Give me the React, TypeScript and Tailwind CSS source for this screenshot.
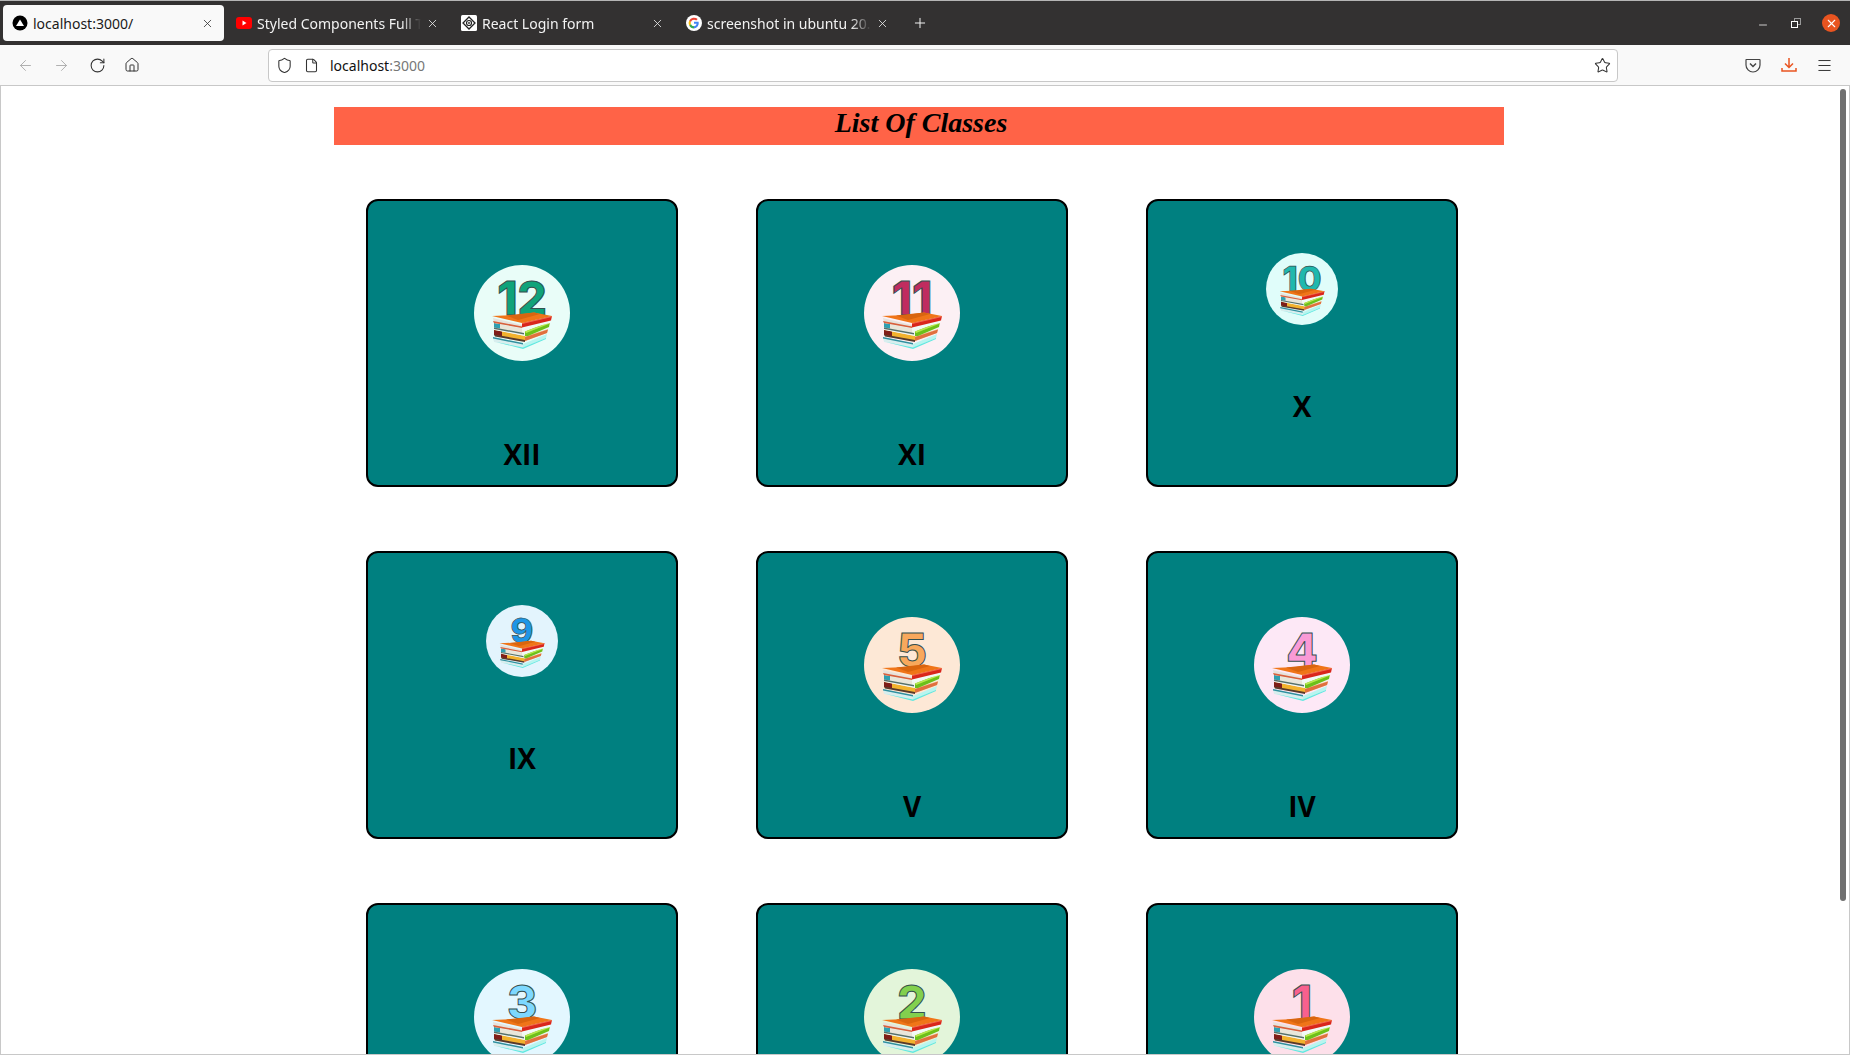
import { ArrowLeft, ArrowRight, File, Home, Menu, Minus, Plus, RotateCw, Shield, Star, X } from 'lucide-react'

interface ClassCard {
  label: string
  num: string
  color: string
  bg: string
  small?: boolean
}

const CLASSES: ClassCard[] = [
  { label: 'XII', num: '12', color: '#0fa37a', bg: 'bg-[#e9fdf8]' },
  { label: 'XI', num: '11', color: '#c02c5f', bg: 'bg-[#fcf0f4]' },
  { label: 'X', num: '10', color: '#1fb8ae', bg: 'bg-[#e0fdfa]', small: true },
  { label: 'IX', num: '9', color: '#1f96e6', bg: 'bg-[#e3f4fd]', small: true },
  { label: 'V', num: '5', color: '#f8a85c', bg: 'bg-[#fde8d6]' },
  { label: 'IV', num: '4', color: '#fa9ad6', bg: 'bg-[#fde8f6]' },
  { label: 'III', num: '3', color: '#7dd8ff', bg: 'bg-[#e3f7ff]' },
  { label: 'II', num: '2', color: '#82d04e', bg: 'bg-[#e3f5da]' },
  { label: 'I', num: '1', color: '#f8608e', bg: 'bg-[#fde0ea]' },
]

const TABS = [
  { title: 'Styled Components Full Tutorial', icon: 'yt' },
  { title: 'React Login form', icon: 'react' },
  { title: 'screenshot in ubuntu 20.04', icon: 'google' },
]

function Favicon({ kind }: { kind: string }) {
  if (kind === 'yt') {
    return (
      <svg viewBox="0 0 16 16" className="size-4 shrink-0">
        <rect x="0" y="2" width="16" height="12" rx="3" fill="#f00" />
        <path d="M6.5 5.5 10.5 8l-4 2.500z" fill="#fff" />
      </svg>
    )
  }
  if (kind === 'react') {
    return (
      <svg viewBox="0 0 16 16" className="size-4 shrink-0">
        <rect width="16" height="16" rx="1.500" fill="#fff" />
        <path d="M8 2 14 8 8 14 2 8z" fill="none" stroke="#222" strokeWidth="1.300" />
        <circle cx="8" cy="8" r="2.500" fill="none" stroke="#222" strokeWidth="1.200" />
        <circle cx="8" cy="8" r="0.900" fill="#222" />
      </svg>
    )
  }
  if (kind === 'google') {
    return (
      <svg viewBox="0 0 16 16" className="size-4 shrink-0">
        <circle cx="8" cy="8" r="8" fill="#fff" />
        <path d="M12.600 6.800H8v1.900h2.700A3 3 0 0 1 8 11.300V13.400a5.300 5.300 0 0 0 4.600-6.600z" fill="#4285f4" />
        <path d="M8 11.300a3.300 3.300 0 0 1-3.100-2.200L3.200 10.400A5.400 5.400 0 0 0 8 13.400z" fill="#34a853" />
        <path d="M4.900 9.100a3.300 3.300 0 0 1 0-2.200L3.200 5.600a5.400 5.400 0 0 0 0 4.800z" fill="#fbbc05" />
        <path d="M8 4.700c.9 0 1.600.3 2.200.9l1.500-1.500A5.400 5.400 0 0 0 3.200 5.600l1.700 1.300A3.300 3.300 0 0 1 8 4.700z" fill="#ea4335" />
      </svg>
    )
  }
  return (
    <svg viewBox="0 0 16 16" className="size-4 shrink-0">
      <circle cx="8" cy="8" r="7.500" fill="#000" />
      <path d="M8 4.500 12 11H4z" fill="#fff" />
    </svg>
  )
}

function TabBar() {
  return (
    <div className="flex h-[45px] shrink-0 items-start border-t border-[#b5b5b5] bg-[#333131] pl-[3px] pt-[4px] font-['Noto_Sans',sans-serif] text-[14px]">
      <div className="flex h-[36px] w-[221px] items-center gap-[5px] rounded-[4px] bg-[#f9f9f9] pl-[9px] text-[#1a1a1a]">
        <Favicon kind="next" />
        <span className="min-w-0 flex-1 truncate">localhost:3000/</span>
        <X size={13} strokeWidth={1.500} className="mr-[10px] shrink-0 text-[#333]" />
      </div>
      {TABS.map((tab, i) => (
        <div key={i} className="ml-[4px] flex h-[36px] w-[221px] items-center gap-[5px] pl-2 text-[#f2f2f2]">
          <Favicon kind={tab.icon} />
          <span className="min-w-0 flex-1 overflow-hidden whitespace-nowrap [mask-image:linear-gradient(to_right,black_88%,transparent)]">
            {tab.title}
          </span>
          <X size={13} strokeWidth={1.500} className="mr-[10px] shrink-0 text-[#eee]" />
        </div>
      ))}
      <div className="flex h-[36px] w-[42px] items-center justify-center text-[#f2f2f2]">
        <Plus size={16} strokeWidth={1.500} />
      </div>
      <div className="ml-auto flex h-[36px] items-center text-white">
        <Minus size={12} strokeWidth={1.500} className="mt-[3px]" />
        <div className="relative ml-[22px] size-[10px]">
          <div className="absolute left-[3px] top-0 size-[7px] border border-[#999]" />
          <div className="absolute bottom-0 left-0 size-[7px] border border-white bg-[#333131]" />
        </div>
        <div className="ml-[21px] mr-[10px] flex size-[18px] items-center justify-center rounded-full bg-[#e95420]">
          <X size={13} strokeWidth={2} />
        </div>
      </div>
    </div>
  )
}

function Toolbar() {
  return (
    <div className="flex h-[41px] shrink-0 items-center border-b border-[#c8c8c8] bg-[#f9f9f9] text-[#333] font-['Noto_Sans',sans-serif] text-[14px]">
      <ArrowLeft size={17} strokeWidth={1.300} className="ml-[17px] text-[#aaa]" />
      <ArrowRight size={17} strokeWidth={1.300} className="ml-[19px] text-[#aaa]" />
      <RotateCw size={17} strokeWidth={1.500} className="ml-[19px]" />
      <Home size={16} strokeWidth={1.500} className="ml-[18px]" />
      <div className="ml-[128px] flex h-[33px] w-[1350px] items-center rounded-[4px] border border-[#c8c8c8] bg-white pl-[7px] pr-[6px]">
        <Shield size={17} strokeWidth={1.500} />
        <File size={15} strokeWidth={1.700} className="ml-[11px]" />
        <span className="ml-[11px] text-[#111]">localhost<span className="text-[#777]">:3000</span></span>
        <Star size={17} strokeWidth={1.500} className="ml-auto" />
      </div>
      <svg viewBox="0 0 16 16" className="ml-[127px] size-4 fill-none stroke-[#444]" strokeWidth="1.200">
        <path d="M1.500 2.500h13a.5.5 0 0 1 .5.5v5a7 7 0 0 1-14 0V3a.5.5 0 0 1 .5-.5z" />
        <path d="M5 6.500 8 9.500 11 6.500" strokeWidth="1.500" />
      </svg>
      <svg viewBox="0 0 16 16" className="ml-[20px] size-4 fill-none stroke-[#e95420]" strokeWidth="1.500">
        <path d="M8 1v9M4 6.500 8 10.500 12 6.500M1 11v3h14v-3" />
      </svg>
      <Menu size={17} strokeWidth={1.400} className="ml-[19px]" />
    </div>
  )
}

function BookBadge({ num, color }: { num: string; color: string }) {
  return (
    <svg viewBox="0 0 96 96" className="size-full">
      {/* bottom book */}
      <polygon points="49,79 73,69 72,73 49,83" fill="#b8f5ef" />
      <polygon points="19,72 49,78 49,83 20,77" fill="#d8eeee" />
      <polygon points="19,72 49,78 49,79.500 19,73.500" fill="#2f8f9f" />
      <polygon points="22,77 49,82.500 72,73 72,74 49,84" fill="#5fe8e0" />
      {/* fourth book */}
      <polygon points="20,65 51,71 74,64 73,68 51,76 21,71" fill="#f4c9a0" />
      <polygon points="20,65 51,71 51,76 20,70" fill="#f2b22e" />
      <polygon points="20,65 28,66.500 28,71.500 20,70" fill="#7f1d18" />
      <polygon points="20,69.500 51,75 51,77 21,71.500" fill="#5a3a2a" />
      <polygon points="51,72 74,64.500 73,68 51,76" fill="#e0703e" />
      {/* third book, green spine */}
      <polygon points="20,58 51,64 76,56 75,63 51,71 21,65" fill="#f2f7f0" />
      <polygon points="20,58 48,63.500 48,68 20,62.500" fill="#e8e6da" />
      <polygon points="20,58 26,59 26,63.500 20,62.500" fill="#2f9fb0" />
      <polygon points="20,62.500 50,68 50,69.500 20,64" fill="#55706a" />
      <polygon points="51,66.500 76,57 75,62 54,71 51,71" fill="#6cc01a" />
      <polygon points="51,66.500 76,57 76,58.500 52,68" fill="#b8e850" />
      {/* top book */}
      <polygon points="19,53 48,60 48,63 20,58" fill="#e6e2dc" />
      <polygon points="19,56 48,61.500 48,63 20,58" fill="#d8603c" />
      <polygon points="48,62 77,55 76,58 48,65" fill="#f0fbf8" />
      <polygon points="48,58 78,51 77,55.500 48,62.500" fill="#d9261c" />
      <polygon points="48,58 78,51 78,52 48,59" fill="#f26a50" />
      <text
        x="48"
        y="50"
        textAnchor="middle"
        fontFamily="Inter, sans-serif"
        fontWeight="800"
        fontSize="46"
        fill={color}
        stroke="#35504f"
        strokeWidth="1"
      >
        {num}
      </text>
      <polygon points="18,51 42,50 60,47.500 78,51 48,58" fill="#f07518" />
      <polygon points="32,50.500 60,47.500 66,49 44,55" fill="#d9650f" />
    </svg>
  )
}

function Card({ item }: { item: ClassCard }) {
  const circle = item.small ? 'mt-[52px] mb-[60px] size-[72px]' : 'mt-16 mb-[72px] size-24'
  return (
    <div className="flex h-[288px] flex-col items-center rounded-[12px] border-2 border-black bg-[#008080]">
      <div className={`${circle} shrink-0 rounded-full ${item.bg}`}>
        <BookBadge num={item.num} color={item.color} />
      </div>
      <div className="font-['Open_Sans',sans-serif] text-[28px] font-bold leading-[42px] text-black">{item.label}</div>
    </div>
  )
}

export default function App() {
  return (
    <div className="flex h-screen flex-col overflow-hidden bg-white">
      <TabBar />
      <Toolbar />
      <div className="flex min-h-0 flex-1 border-x border-b border-[#c8c8c8]">
        <main className="min-w-0 flex-1 overflow-hidden pt-[21px]">
          <div className="mx-auto w-[1170px]">
            <h1 className="h-[38px] bg-[#ff6347] pl-1 text-center font-['Liberation_Serif',serif] text-[28px] font-semibold italic leading-[32px] text-black">
              List Of Classes
            </h1>
            <div className="mt-[53.75px] grid grid-cols-[repeat(3,312px)] gap-x-[78px] gap-y-[64.25px] pl-8">
              {CLASSES.map(c => (
                <Card key={c.label} item={c} />
              ))}
            </div>
          </div>
        </main>
        <div className="w-[12px] shrink-0 pt-[3px]">
          <div className="ml-[3px] h-[812px] w-[6px] rounded-full bg-[#6f6f6f]" />
        </div>
      </div>
    </div>
  )
}
